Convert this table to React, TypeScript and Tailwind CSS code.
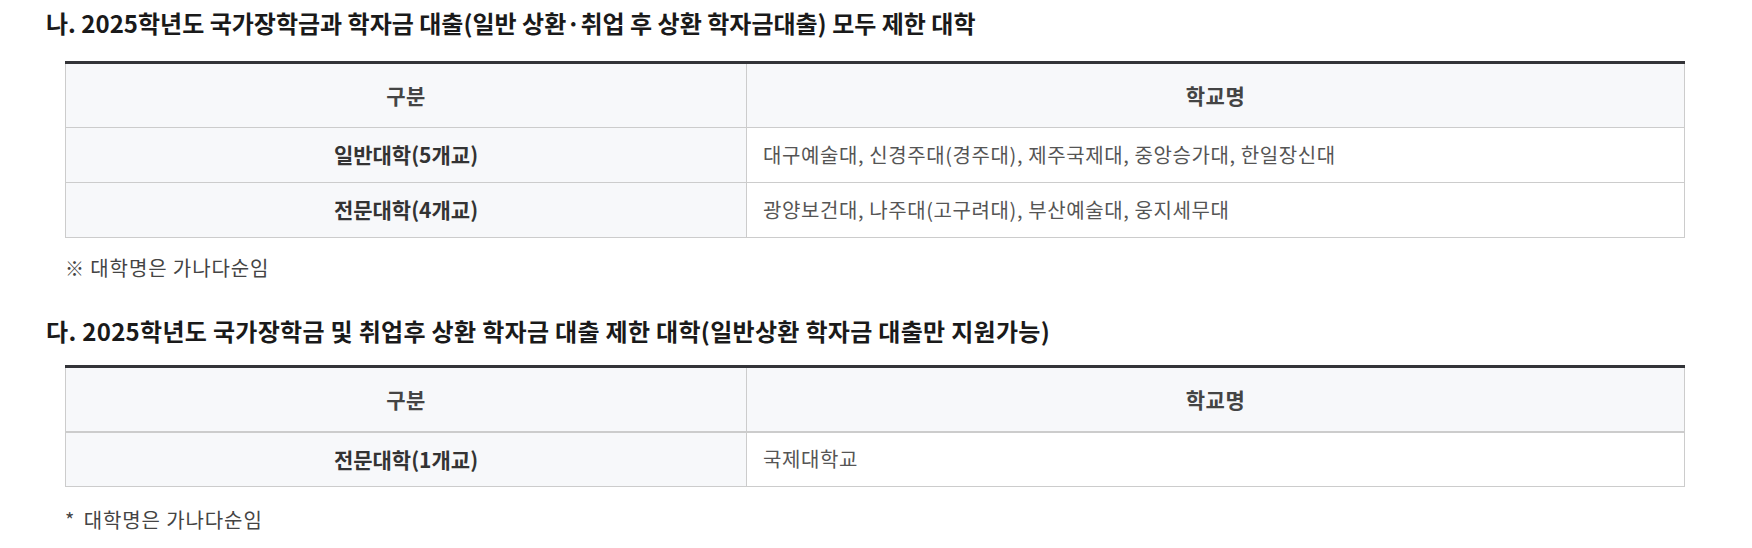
const TABLE_A = [
  { type: "일반대학(5개교)", names: "대구예술대, 신경주대(경주대), 제주국제대, 중앙승가대, 한일장신대" },
  { type: "전문대학(4개교)", names: "광양보건대, 나주대(고구려대), 부산예술대, 웅지세무대" },
];

const TABLE_B = [{ type: "전문대학(1개교)", names: "국제대학교" }];

function SchoolTable({ rows, headBorder }: { rows: { type: string; names: string }[]; headBorder: string }) {
  return (
    <table className="ml-[19px] w-[1620px] table-fixed border-collapse border-t-[3px] border-t-[#333438]">
      <colgroup>
        <col className="w-[681px]" />
        <col />
      </colgroup>
      <thead>
        <tr className={`h-[65px] bg-[#f7f8fa] ${headBorder}`}>
          <th className="border-l border-r border-[#cccccc] text-center text-[21px] font-bold tracking-[0.5px] text-[#444]">구분</th>
          <th className="border-r border-[#cccccc] text-center text-[21px] font-bold tracking-[0.5px] text-[#444]">학교명</th>
        </tr>
      </thead>
      <tbody>
        {rows.map((r) => (
          <tr key={r.type} className="h-[55px]">
            <td className="border border-[#cccccc] bg-[#f7f8fa] text-center text-[21px] font-bold text-[#333]">{r.type}</td>
            <td className="border border-[#cccccc] bg-white px-4 text-left text-[20px] tracking-[0.6px] text-[#555]">{r.names}</td>
          </tr>
        ))}
      </tbody>
    </table>
  );
}

export default function App() {
  return (
    <div
      className="min-h-screen bg-white pl-[46px] pt-[6px]"
      style={{ fontFamily: '"Noto Sans CJK KR", "Noto Sans", sans-serif' }}
    >
      <h3 className="text-[24px] font-bold leading-[34px] text-[#1a1a1a]">
        나. 2025학년도 국가장학금과 학자금 대출(일반 상환·취업 후 상환 학자금대출) 모두 제한 대학
      </h3>
      <div className="mt-[21px]">
        <SchoolTable rows={TABLE_A} headBorder="border-b border-[#cccccc]" />
      </div>
      <p className="mt-[16px] ml-[19px] text-[20px] leading-[28px] tracking-[0.9px] text-[#444]">
        <span className="text-[19px]">※</span> 대학명은 가나다순임
      </p>

      <h3 className="mt-[32px] text-[24px] font-bold leading-[34px] tracking-[0.3px] text-[#1a1a1a]">
        다. 2025학년도 국가장학금 및 취업후 상환 학자금 대출 제한 대학(일반상환 학자금 대출만 지원가능)
      </h3>
      <div className="mt-[17px]">
        <SchoolTable rows={TABLE_B} headBorder="border-b-2 border-[#cccccc]" />
      </div>
      <p className="mt-[19px] ml-[19px] text-[20px] leading-[28px] tracking-[0.9px] text-[#444]">
        <span className="mr-[3px]">*</span> 대학명은 가나다순임
      </p>
    </div>
  );
}
